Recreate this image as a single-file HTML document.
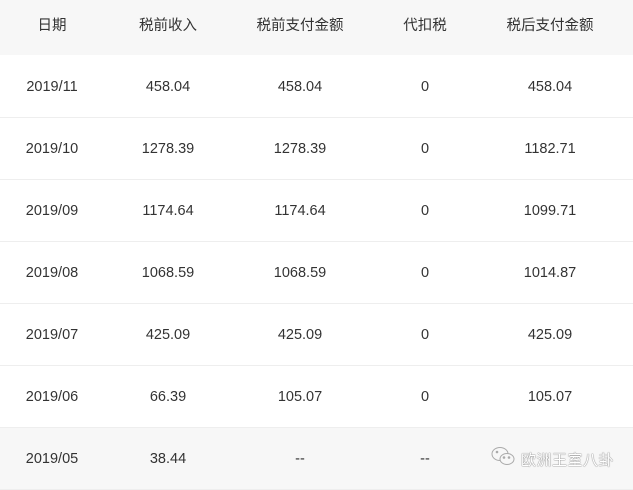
<!DOCTYPE html>
<html><head><meta charset="utf-8"><style>
body{margin:0;width:633px;height:482px;overflow:hidden;background:#fff;font-family:"Liberation Sans","Noto Sans CJK SC",sans-serif;font-size:14.5px;color:#333}
.r{position:absolute;left:0;width:633px;border-bottom:1px solid #eee}
.c{position:absolute;top:0;transform:translateX(-50%);white-space:nowrap}
</style></head><body>
<div class="r" style="top:0;height:55px;background:#f7f7f7;border:none"></div>
<div id="t"></div>
<script>
var xs=[52,168,300,425,550];
var rows=[["日期","税前收入","税前支付金额","代扣税","税后支付金额"],
["2019/11","458.04","458.04","0","458.04"],
["2019/10","1278.39","1278.39","0","1182.71"],
["2019/09","1174.64","1174.64","0","1099.71"],
["2019/08","1068.59","1068.59","0","1014.87"],
["2019/07","425.09","425.09","0","425.09"],
["2019/06","66.39","105.07","0","105.07"],
["2019/05","38.44","--","--",""]];
var h="";
rows.forEach(function(r,i){
 var cy=i==0?25:86+(i-1)*62;
 if(i>0){var top=56+(i-1)*62;h+='<div class="r" style="top:'+top+'px;height:61px;'+(i==7?'background:#f7f7f7;':'')+'"></div>';}
 r.forEach(function(t,j){h+='<div class="c" style="left:'+xs[j]+'px;top:'+(cy-8)+'px;line-height:18px">'+t+'</div>';});
});
h+='<svg style="position:absolute;left:491px;top:445px" width="26" height="24" viewBox="0 0 26 24" fill="none" stroke="#aaa" stroke-width="1"><ellipse cx="9" cy="9" rx="8" ry="6.5"/><ellipse cx="16" cy="14" rx="7" ry="5.5" fill="#f7f7f7"/><circle cx="6" cy="7" r="0.8" fill="#aaa"/><circle cx="13" cy="12.5" r="0.8" fill="#aaa"/><circle cx="18" cy="12.5" r="0.8" fill="#aaa"/></svg>';
h+='<div style="position:absolute;left:521px;top:449px;color:#fff;font-size:15px;letter-spacing:0.5px;text-shadow:0 0 1px #777,0 0 1px #777">欧洲王室八卦</div>';
document.getElementById("t").innerHTML=h;
</script>
</body></html>
